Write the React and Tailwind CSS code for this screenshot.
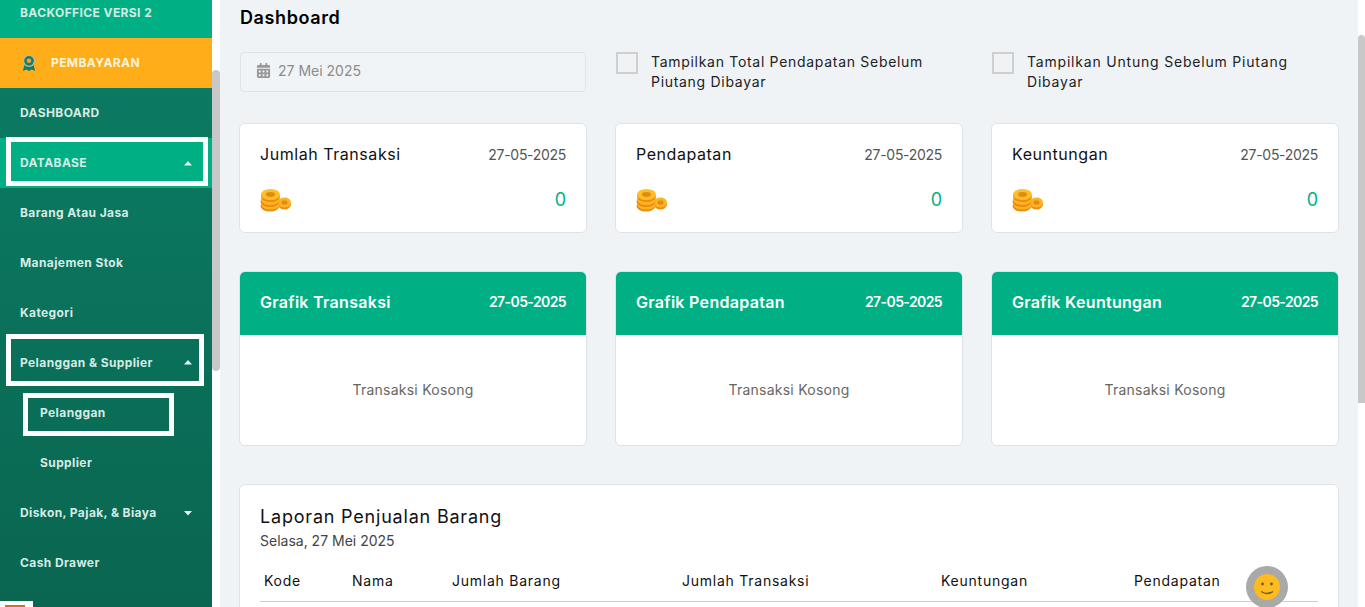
import React from 'react';
import { FaCalendarAlt } from 'react-icons/fa';

const cards = ['Jumlah Transaksi', 'Pendapatan', 'Keuntungan'];
const charts = ['Grafik Transaksi', 'Grafik Pendapatan', 'Grafik Keuntungan'];

function Caret({ up }) {
  return (
    <svg width="8" height="5" viewBox="0 0 8 5" className="shrink-0">
      <polygon points={up ? '4,0 8,4.5 0,4.5' : '0,0 8,0 4,4.5'} fill="#e6f3ef" />
    </svg>
  );
}

function Coins() {
  return (
    <svg width="32" height="24" viewBox="0 0 32 24">
      <ellipse cx="24.5" cy="16" rx="6.5" ry="5.5" fill="#f08c12" />
      <ellipse cx="24.5" cy="14.5" rx="6.5" ry="5" fill="#fbb522" />
      <ellipse cx="24.5" cy="14.5" rx="3" ry="2.2" fill="#e58a10" />
      <ellipse cx="10" cy="18" rx="9.5" ry="5.5" fill="#ef8a12" />
      <ellipse cx="10.5" cy="16" rx="9.5" ry="5.5" fill="#fbb522" />
      <ellipse cx="10" cy="13.5" rx="9.5" ry="5.5" fill="#ef8a12" />
      <ellipse cx="10.5" cy="11.5" rx="9.5" ry="5.5" fill="#fbb522" />
      <ellipse cx="10.5" cy="8.5" rx="9.5" ry="5.5" fill="#ef8a12" />
      <ellipse cx="10.5" cy="6.5" rx="9.5" ry="5.5" fill="#fdbf28" />
      <ellipse cx="10.5" cy="6.5" rx="4.4" ry="2.4" fill="#e58a10" />
    </svg>
  );
}

function Medal() {
  return (
    <svg width="14" height="18" viewBox="0 0 16 20" className="ml-0.5">
      <polygon points="3,11 1,19 5,17.5 8,19 11,17.5 15,19 13,11" fill="#0f7f6a" />
      <circle cx="8" cy="7.5" r="7" fill="#c9b98a" />
      <circle cx="8" cy="7.5" r="5.5" fill="#137f72" />
      <circle cx="8" cy="7.5" r="2.6" fill="#f3a52c" />
    </svg>
  );
}

function Smile() {
  return (
    <div className="absolute left-[1246px] top-[566px] w-[42px] h-[42px] rounded-full bg-[#a9a9a9] flex items-center justify-center">
      <svg width="26" height="26" viewBox="0 0 26 26">
        <circle cx="13" cy="13" r="13" fill="#fdbb1f" />
        <circle cx="8.5" cy="10" r="1.4" fill="#6b5a3a" />
        <circle cx="17.5" cy="10" r="1.4" fill="#6b5a3a" />
        <path d="M7 17.5 Q13 21.5 19 17.5" stroke="#6b5a3a" strokeWidth="1.4" fill="none" />
      </svg>
    </div>
  );
}

function Sidebar() {
  const item = 'flex items-center h-[50px] px-5 text-[12px] tracking-[0.4px] font-bold text-[#d5ebe5]';
  return (
    <div className="w-[212px] shrink-0 -mt-3 h-[619px] overflow-hidden flex flex-col">
      <div className={`${item} bg-[#00b084] uppercase shrink-0`}>Backoffice Versi 2</div>
      <div className={`${item} bg-[#ffae19] text-[#fff3dc] gap-[15px] shrink-0`}>
        <Medal /> PEMBAYARAN
      </div>
      <div className="flex-1 bg-linear-to-b from-[#0b7a62] to-[#0a6650]">
        <div className={item}>DASHBOARD</div>
        <div className="h-[50px] bg-[#00b084]">
          <div className="relative -top-px ml-[6px] w-[202px] h-[49px] pt-[3px] border-[5px] border-white flex items-center justify-between pl-[9px] pr-[11px] text-[12px] tracking-[0.4px] font-bold text-[#d5ebe5]">
            DATABASE <Caret up />
          </div>
        </div>
        <div className={item}>Barang Atau Jasa</div>
        <div className={item}>Manajemen Stok</div>
        <div className={item}>Kategori</div>
        <div className="h-[50px]">
          <div className="relative -top-1 ml-[6px] w-[198px] h-[52px] pt-[5px] border-[5px] border-white flex items-center justify-between pl-[9px] pr-[7px] text-[12px] tracking-[0.4px] font-bold text-[#d5ebe5]">
            Pelanggan &amp; Supplier <Caret up />
          </div>
        </div>
        <div className="h-[50px] pt-[5px]">
          <div className="ml-[23px] w-[151px] h-[43px] pb-[3px] border-[5px] border-white flex items-center pl-3 text-[12px] tracking-[0.4px] font-bold text-[#d5ebe5]">
            Pelanggan
          </div>
        </div>
        <div className={`${item} pl-10`}>Supplier</div>
        <div className={`${item} justify-between`}>
          Diskon, Pajak, &amp; Biaya <Caret />
        </div>
        <div className={item}>Cash Drawer</div>
      </div>
    </div>
  );
}

export default function App() {
  return (
    <div className="relative h-[607px] overflow-hidden flex bg-[#eff3f6] text-[#111] font-['Inter','Liberation_Sans',sans-serif]">
      <Sidebar />

      {/* sidebar scrollbar */}
      <div className="w-2 shrink-0 bg-white">
        <div className="mt-[70px] h-[301px] bg-[#c8c8c8] rounded-t-[4px] rounded-b-[4px]" />
      </div>

      <div className="flex-1 min-w-0 px-[19px] pt-[7px]">
        <h1 className="pl-px text-[18px] leading-[22px] font-semibold tracking-[0.6px] text-black">Dashboard</h1>

        <div className="grid grid-cols-3 gap-x-[30px] px-px mt-[23px]">
          <div className="h-10 border border-[#dfe3e8] rounded bg-[#f1f4f6] flex items-center pb-1 pl-[15px] text-[14px] text-[#8c8c8c]">
            <FaCalendarAlt className="text-[#999] text-[15px] mr-[7px]" />
            27 Mei 2025
          </div>
          <label className="flex items-start gap-[13px]">
            <span className="w-[22px] h-[22px] shrink-0 border-2 border-[#cfcfcf]" />
            <span className="text-[14px] leading-5 tracking-[0.7px] text-[#222]">Tampilkan Total Pendapatan Sebelum Piutang Dibayar</span>
          </label>
          <label className="flex items-start gap-[13px]">
            <span className="w-[22px] h-[22px] shrink-0 border-2 border-[#cfcfcf]" />
            <span className="text-[14px] leading-5 tracking-[0.8px] text-[#222]">Tampilkan Untung Sebelum Piutang Dibayar</span>
          </label>
        </div>

        <div className="grid grid-cols-3 gap-x-7 mt-[31px]">
          {cards.map((title) => (
            <div key={title} className="h-[110px] bg-white border border-[#dfe3e8] rounded-md px-5 pt-5">
              <div className="flex items-center justify-between h-5">
                <span className="text-[16px] tracking-[0.55px] text-[#111]">{title}</span>
                <span className="text-[14px] tracking-[-0.3px] text-[#555]">27-05-2025</span>
              </div>
              <div className="flex items-center justify-between mt-[22px]">
                <Coins />
                <span className="text-[18px] text-[#00b084]">0</span>
              </div>
            </div>
          ))}
        </div>

        <div className="grid grid-cols-3 gap-x-7 mt-[38px]">
          {charts.map((title) => (
            <div key={title} className="h-[175px] bg-white border border-[#dfe3e8] rounded-md overflow-hidden">
              <div className="h-[63px] pb-1 bg-[#00b084] px-5 flex items-center justify-between text-white">
                <span className="text-[16px] tracking-[0.3px] font-semibold">{title}</span>
                <span className="text-[14px] tracking-[-0.6px] font-semibold">27-05-2025</span>
              </div>
              <div className="h-[110px] pb-0.5 flex items-center justify-center text-[14px] tracking-[0.25px] text-[#666]">Transaksi Kosong</div>
            </div>
          ))}
        </div>

        <div className="mt-[38px] bg-white border border-[#dfe3e8] rounded-md px-5 pt-[21px] h-[200px]">
          <div className="text-[18px] leading-[22px] tracking-[0.8px] text-[#111]">Laporan Penjualan Barang</div>
          <div className="text-[14px] leading-5 mt-[3px] text-[#444]">Selasa, 27 Mei 2025</div>
          <div className="flex h-[41px] items-center pb-0.5 pl-1 border-b border-[#cfcfcf] mt-[10px] text-[14px] tracking-[0.75px] text-[#111]">
            <span className="w-[88px]">Kode</span>
            <span className="w-[100px]">Nama</span>
            <span className="w-[230px]">Jumlah Barang</span>
            <span className="w-[259px]">Jumlah Transaksi</span>
            <span className="w-[193px]">Keuntungan</span>
            <span>Pendapatan</span>
          </div>
        </div>
      </div>

      {/* page scrollbar */}
      <div className="w-[7px] shrink-0 bg-white">
        <div className="mt-[35px] h-[368px] bg-[#c8c8c8] rounded-t-sm" />
      </div>

      <Smile />

      <div className="absolute left-0 top-[601px] w-[33px] h-[6px] bg-white">
        <div className="ml-[5px] mt-1 w-5 h-[2px] bg-[#c9721f]" />
      </div>
    </div>
  );
}
